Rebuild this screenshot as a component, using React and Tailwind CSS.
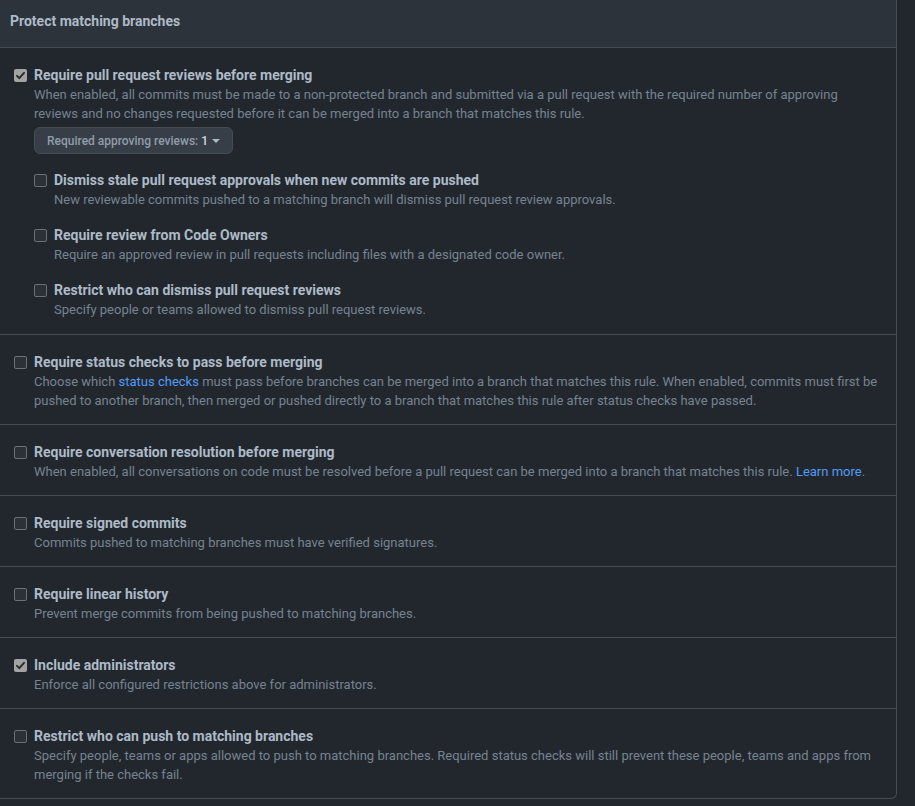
import React from "react";

function Checkbox({ checked }) {
  if (checked) {
    return (
      <span className="w-[13px] h-[13px] rounded-[2px] bg-[#a3a3a3] flex items-center justify-center shrink-0">
        <svg width="11" height="11" viewBox="0 0 11 11">
          <path d="M2 5.8 L4.3 8.2 L9 2.8" fill="none" stroke="#2b2b2b" strokeWidth="1.9" strokeLinecap="round" strokeLinejoin="round" />
        </svg>
      </span>
    );
  }
  return <span className="w-[13px] h-[13px] rounded-[2px] bg-[#2c3137] border border-[#6b7078] shrink-0" />;
}

function Option({ checked, title, children, extra }) {
  return (
    <div className="flex gap-[7px]">
      <div className="h-[20px] flex items-center">
        <Checkbox checked={checked} />
      </div>
      <div className="flex-1 min-w-0">
        <div className="text-[14px] leading-[20px] font-bold text-[#adbac7]">{title}</div>
        <div className="text-[13px] leading-[19px] text-[#768390]">{children}</div>
        {extra}
      </div>
    </div>
  );
}

function Section({ children, last, first }) {
  return (
    <div
      className={
        "pt-[17px] pl-[14px] pr-[16px]" +
        (first ? " pb-[15px]" : " pb-[14px]") +
        (last ? "" : " border-b border-[#444c56]")
      }
    >
      {children}
    </div>
  );
}

export default function App() {
  return (
    <div className="h-[806px] overflow-hidden bg-[#22272e] flex items-start" style={{ fontFamily: "Roboto, 'Liberation Sans', sans-serif" }}>
      <div className="w-[897px] shrink-0 border-r border-b border-[#444c56] rounded-br-md">
        <div className="h-[48px] bg-[#2d333b] border-b border-[#444c56] flex items-center pb-[4px] pl-[10px]">
          <h2 className="text-[14px] font-bold text-[#adbac7]">Protect matching branches</h2>
        </div>

        <Section first>
          <Option
            checked
            title="Require pull request reviews before merging"
            extra={
              <div>
                <button className="mt-[4px] h-[27px] px-[12px] rounded-md bg-[#373e47] border border-[#444c56] text-[12px] font-medium text-[#909dab] flex items-center">
                  <span>Required approving reviews:</span>
                  <span className="ml-[3px] text-[#cdd9e5]">1</span>
                  <span className="ml-[4px] w-0 h-0 border-l-[4px] border-r-[4px] border-t-[4px] border-l-transparent border-r-transparent border-t-[#adbac7]" />
                </button>
                <div className="mt-[16px] flex flex-col gap-[16px]">
                  <Option title="Dismiss stale pull request approvals when new commits are pushed">
                    New reviewable commits pushed to a matching branch will dismiss pull request review approvals.
                  </Option>
                  <Option title="Require review from Code Owners">
                    Require an approved review in pull requests including files with a designated code owner.
                  </Option>
                  <Option title="Restrict who can dismiss pull request reviews">
                    Specify people or teams allowed to dismiss pull request reviews.
                  </Option>
                </div>
              </div>
            }
          >
            When enabled, all commits must be made to a non-protected branch and submitted via a pull request with the required number of approving reviews and no changes requested before it can be merged into a branch that matches this rule.
          </Option>
        </Section>

        <Section>
          <Option title="Require status checks to pass before merging">
            Choose which <a className="text-[#539bf5]">status checks</a> must pass before branches can be merged into a branch that matches this rule. When enabled, commits must first be pushed to another branch, then merged or pushed directly to a branch that matches this rule after status checks have passed.
          </Option>
        </Section>

        <Section>
          <Option title="Require conversation resolution before merging">
            When enabled, all conversations on code must be resolved before a pull request can be merged into a branch that matches this rule. <a className="text-[#539bf5]">Learn more</a>.
          </Option>
        </Section>

        <Section>
          <Option title="Require signed commits">
            Commits pushed to matching branches must have verified signatures.
          </Option>
        </Section>

        <Section>
          <Option title="Require linear history">
            Prevent merge commits from being pushed to matching branches.
          </Option>
        </Section>

        <Section>
          <Option checked title="Include administrators">
            Enforce all configured restrictions above for administrators.
          </Option>
        </Section>

        <Section last>
          <Option title="Restrict who can push to matching branches">
            Specify people, teams or apps allowed to push to matching branches. Required status checks will still prevent these people, teams and apps from merging if the checks fail.
          </Option>
        </Section>
      </div>
    </div>
  );
}
